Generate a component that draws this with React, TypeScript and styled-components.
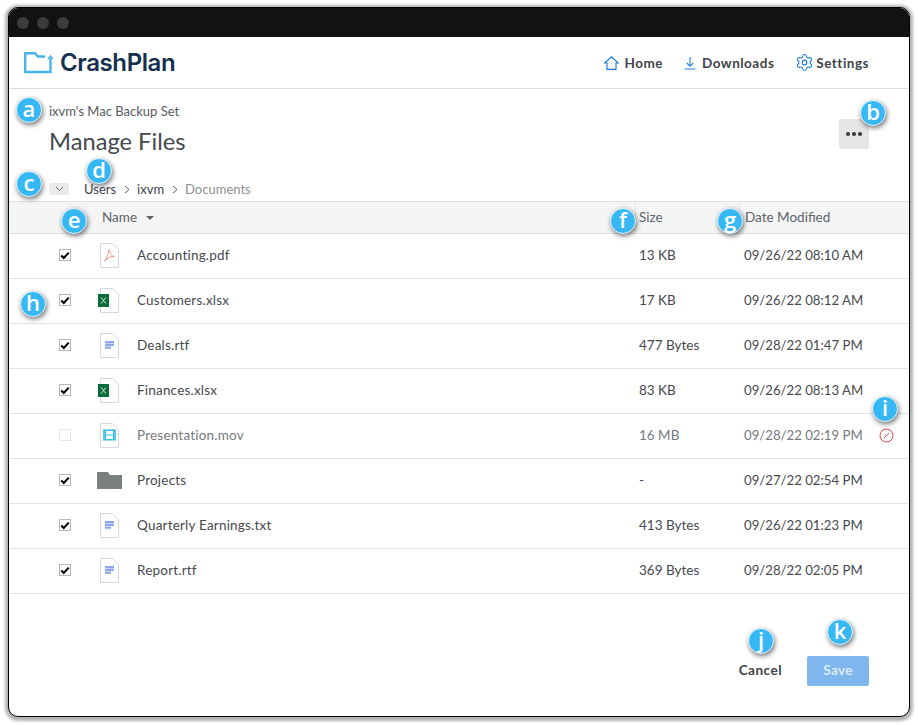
import type { ReactNode } from 'react'
import styled, { createGlobalStyle } from 'styled-components'
import { Settings as GearIcon } from 'lucide-react'

const GlobalStyle = createGlobalStyle`
  html, body {
    margin: 0;
    background: #fff;
  }
  body {
    font-family: "Lato", "Liberation Sans", sans-serif;
  }
`

const Page = styled.div`
  width: 918px;
  height: 725px;
  padding: 7px 8px;
  box-sizing: border-box;
  overflow: hidden;
`

const Window = styled.div`
  position: relative;
  width: 902px;
  height: 710px;
  box-sizing: border-box;
  border: 1px solid #000;
  border-radius: 10px;
  background: #fff;
  box-shadow: 0 1px 3px 3px rgba(0, 0, 0, 0.3);
  display: flex;
  flex-direction: column;
`

const TitleBar = styled.div`
  flex: none;
  height: 29px;
  background: #121212;
  border-radius: 9px 9px 0 0;
  display: flex;
  align-items: center;
  gap: 8px;
  padding: 0 0 0 8px;
  box-sizing: border-box;
`

const TrafficDot = styled.span`
  width: 12px;
  height: 12px;
  border-radius: 50%;
  background: #3b3b3b;
`

const Header = styled.header`
  flex: none;
  height: 52px;
  box-sizing: border-box;
  border-bottom: 1px solid #dcdcdc;
  display: flex;
  align-items: center;
  padding: 0 40px 0 15px;
`

const Logo = styled.div`
  display: flex;
  align-items: center;
  gap: 7px;
  color: #13304f;
  font-family: "Inter", sans-serif;
  font-size: 24px;
  font-weight: 600;
  letter-spacing: -0.4px;
`

const Nav = styled.nav`
  margin-left: auto;
  display: flex;
  align-items: center;
  gap: 21px;
`

const NavLink = styled.a`
  display: flex;
  align-items: center;
  gap: ${p => p.$gap}px;
  color: #3d4348;
  font-size: 13.5px;
  font-weight: 700;
  letter-spacing: 0.5px;
`

const TitleArea = styled.div`
  flex: none;
  height: 112px;
  box-sizing: border-box;
  padding: 15px 40px 0 40px;
  display: flex;
  flex-direction: column;
`

const TitleRow = styled.div`
  display: flex;
  justify-content: space-between;
`

const SetName = styled.div`
  font-size: 13px;
  line-height: 15px;
  color: #565b60;
`

const PageTitle = styled.h1`
  margin: 7px 0 0;
  font-size: 23.7px;
  line-height: 30px;
  font-weight: 400;
  color: #44494e;
`

const MoreButton = styled.button`
  width: 30px;
  height: 30px;
  margin-top: 15px;
  padding: 0;
  border: 0;
  border-radius: 2px;
  background: #e5e5e5;
  display: flex;
  align-items: center;
  justify-content: center;
  gap: 2.5px;
`

const MoreDot = styled.span`
  width: 3.5px;
  height: 3.5px;
  border-radius: 50%;
  background: #3c4247;
`

const CrumbRow = styled.div`
  margin-top: 26px;
  display: flex;
  align-items: center;
  height: 14px;
  font-size: 13px;
  color: #3f4449;
`

const Toggle = styled.button`
  width: 20px;
  height: 12px;
  margin-right: 15px;
  padding: 0;
  border: 0;
  border-radius: 2px;
  background: #eaeaea;
  display: flex;
  align-items: center;
  justify-content: center;
`

const CrumbSep = styled.svg`
  margin: 0 7.5px;
`

const CrumbCurrent = styled.span`
  color: #8d9195;
`

const TableHead = styled.div`
  flex: none;
  height: 33px;
  box-sizing: border-box;
  background: #f4f5f5;
  border-top: 1px solid #dfdfdf;
  border-bottom: 1px solid #dfdfdf;
  display: grid;
  grid-template-columns: 93px 533px 104px 1fr;
  align-items: stretch;
  font-size: 13.5px;
  color: #606469;
`

const HeadCell = styled.div`
  grid-column: ${p => p.$col};
  display: flex;
  align-items: center;
  gap: 9px;
  padding-left: ${p => p.$pad}px;
  padding-bottom: 1px;
  border-left: ${p => (p.$divider ? '1px solid #e4e5e5' : '0')};
`

const Caret = styled.span`
  width: 0;
  height: 0;
  margin-top: 2px;
  border-left: 4px solid transparent;
  border-right: 4px solid transparent;
  border-top: 4px solid #606469;
`

const Row = styled.div`
  flex: none;
  height: 45px;
  box-sizing: border-box;
  padding-bottom: 2px;
  border-bottom: 1px solid #e2e2e2;
  display: grid;
  grid-template-columns: 85px 43px 502px 105px 1fr;
  align-items: center;
  font-size: 13.5px;
  color: ${p => (p.$muted ? '#75797d' : '#45494d')};
`

const CheckCell = styled.div`
  padding-left: 50px;
  display: flex;
`

const CheckBox = styled.span`
  width: 12px;
  height: 12px;
  box-sizing: border-box;
  border: 1px solid ${p => (p.$off ? '#e6e6e6' : '#b5b8bd')};
  background: #fff;
  display: flex;
  align-items: center;
  justify-content: center;
`

const IconCell = styled.div`
  display: flex;
  margin-left: ${p => p.$offset}px;
`

const NameCell = styled.div`
  letter-spacing: 0.2px;
`

const DateCell = styled.div`
  display: flex;
  align-items: center;
  justify-content: space-between;
  padding-right: 15px;
  font-size: 13.2px;
`

const Footer = styled.footer`
  flex: 1;
  display: flex;
  justify-content: flex-end;
  align-items: flex-end;
  gap: 25px;
  padding: 0 40px 30px 0;
`

const CancelButton = styled.button`
  height: 30px;
  padding: 0 0 2px;
  border: 0;
  background: none;
  font: 700 13.5px "Lato", sans-serif;
  letter-spacing: 0.5px;
  color: #3d4348;
`

const SaveButton = styled.button`
  width: 62px;
  height: 30px;
  padding: 0 0 2px;
  border: 0;
  border-radius: 2px;
  background: #7fb6ee;
  font: 700 13.5px "Lato", sans-serif;
  letter-spacing: 0.3px;
  color: #dcebfa;
`

const Badge = styled.span`
  position: absolute;
  left: ${p => p.$x - 13 - 9}px;
  top: ${p => p.$y - 13 - 8}px;
  width: 26px;
  height: 26px;
  box-sizing: border-box;
  border: 1.5px solid #e8f6fd;
  border-radius: 50%;
  background: #35b8f4;
  box-shadow: 1px 2px 5px rgba(0, 0, 0, 0.55);
  color: #fff;
  font-family: "Open Sans", sans-serif;
  font-size: 22px;
  font-weight: 600;
  line-height: 21px;
  text-align: center;
`

const FileSvg = ({ children }: { children?: ReactNode }) => (
  <svg width="19" height="25" viewBox="0 0 19 25" fill="none">
    <path d="M0.5 0.5H12.5L18.5 6.5V24.5H0.5Z" fill="#fff" stroke="#d6d8da" />
    {children}
  </svg>
)

const PdfIcon = () => (
  <FileSvg>
    <path
      d="M9 6.5C8.6 9.5 7.5 14 4.5 18.2C8 14.5 11 13.5 14.5 13.5C11.5 13 9.8 10.5 9 6.5Z"
      stroke="#ee9a8e"
      strokeWidth="1"
    />
  </FileSvg>
)

const DocIcon = () => (
  <FileSvg>
    <path d="M5 8H14V10.2H5ZM5 10.8H14V13H5ZM5 13.6H11V15.8H5Z" fill="#8fa5ec" />
  </FileSvg>
)

const ExcelIcon = () => (
  <svg width="21" height="25" viewBox="0 0 21 25" fill="none">
    <path d="M2.5 0.5H14.5L20.5 6.5V24.5H2.5Z" fill="#fff" stroke="#d6d8da" />
    <rect x="0" y="6" width="11" height="13" fill="#0b6b3a" />
    <path d="M3.2 9.5L7.8 15.5M7.8 9.5L3.2 15.5" stroke="#d7eadf" strokeWidth="1" />
  </svg>
)

const MovieIcon = () => (
  <FileSvg>
    <path d="M3 6.5H16V17.5H3ZM6 8V11.5H13V8ZM6 12.5V16H13V12.5Z" fill="#3cc0e4" fillRule="evenodd" />
    <path
      d="M3 8.5H4.5V9.5H3ZM3 11.500H4.5V12.5H3ZM3 14.5H4.5V15.5H3ZM14.5 8.5H16V9.5H14.5ZM14.5 11.5H16V12.5H14.5ZM14.5 14.5H16V15.5H14.5Z"
      fill="#a8e3f3"
    />
  </FileSvg>
)

const FolderIcon = () => (
  <svg width="25" height="17" viewBox="0 0 25 17">
    <path d="M0 0H11L13 3H25V17H0Z" fill="#7a8080" />
  </svg>
)

const BlockedIcon = () => (
  <svg width="15" height="15" viewBox="0 0 15 15" fill="none" stroke="#e8434a">
    <circle cx="7.5" cy="7.5" r="6.5" />
    <path d="M5 10L10 5" />
  </svg>
)

const Check = () => (
  <svg width="12" height="11" viewBox="0 0 12 11" fill="none">
    <path d="M1.5 5.5L4.5 8.5L10.5 2" stroke="#000" strokeWidth="2.4" />
  </svg>
)

const files = [
  { name: 'Accounting.pdf', size: '13 KB', date: '09/26/22 08:10 AM', icon: <PdfIcon />, offset: 6 },
  { name: 'Customers.xlsx', size: '17 KB', date: '09/26/22 08:12 AM', icon: <ExcelIcon />, offset: 4 },
  { name: 'Deals.rtf', size: '477 Bytes', date: '09/28/22 01:47 PM', icon: <DocIcon />, offset: 6 },
  { name: 'Finances.xlsx', size: '83 KB', date: '09/26/22 08:13 AM', icon: <ExcelIcon />, offset: 4 },
  { name: 'Presentation.mov', size: '16 MB', date: '09/28/22 02:19 PM', icon: <MovieIcon />, offset: 6, blocked: true },
  { name: 'Projects', size: '-', date: '09/27/22 02:54 PM', icon: <FolderIcon />, offset: 3 },
  { name: 'Quarterly Earnings.txt', size: '413 Bytes', date: '09/26/22 01:23 PM', icon: <DocIcon />, offset: 6 },
  { name: 'Report.rtf', size: '369 Bytes', date: '09/28/22 02:05 PM', icon: <DocIcon />, offset: 6 },
]

const badges = [
  ['a', 29, 110],
  ['b', 873, 113],
  ['c', 29, 184],
  ['d', 99, 171],
  ['e', 74, 221],
  ['f', 623, 221],
  ['g', 730, 221],
  ['h', 33, 304],
  ['i', 885, 409],
  ['j', 761, 641],
  ['k', 840, 632],
] as const

export default function App() {
  return (
    <Page>
      <GlobalStyle />
      <Window>
        <TitleBar>
          <TrafficDot />
          <TrafficDot />
          <TrafficDot />
        </TitleBar>
        <Header>
          <Logo>
            <svg width="29" height="22" viewBox="0 0 29 22" fill="none" stroke="#46b4e8" strokeWidth="2.4">
              <path d="M1.2 21V1.2H11L14 4.5H21" />
              <path d="M1.2 20H26.5V6" />
              <path d="M24.2 7L26.5 4L28.8 7" strokeWidth="1.5" />
            </svg>
            CrashPlan
          </Logo>
          <Nav>
            <NavLink $gap={6}>
              <svg width="15" height="14" viewBox="0 0 15 14" fill="none" stroke="#1577d8" strokeWidth="1.1">
                <path d="M0.7 7L7.5 0.8L14.3 7H12V13.4H3V7Z" />
              </svg>
              Home
            </NavLink>
            <NavLink $gap={6}>
              <svg width="12" height="14" viewBox="0 0 12 14" fill="none" stroke="#2a86e0" strokeWidth="1.1">
                <path d="M6 1V10M2.8 7L6 10.2L9.2 7M0.5 13H11.5" />
              </svg>
              Downloads
            </NavLink>
            <NavLink $gap={2}>
              <GearIcon size={19} color="#1577d8" strokeWidth={1.3} />
              Settings
            </NavLink>
          </Nav>
        </Header>
        <TitleArea>
          <TitleRow>
            <div>
              <SetName>ixvm's Mac Backup Set</SetName>
              <PageTitle>Manage Files</PageTitle>
            </div>
            <MoreButton aria-label="More">
              <MoreDot />
              <MoreDot />
              <MoreDot />
            </MoreButton>
          </TitleRow>
          <CrumbRow>
            <Toggle aria-label="Collapse">
              <svg width="9" height="6" viewBox="0 0 9 6" fill="none" stroke="#666b70">
                <path d="M1 1L4.5 4.5L8 1" />
              </svg>
            </Toggle>
            Users
            <CrumbSep width="6" height="9" viewBox="0 0 6 9" fill="none" stroke="#555a5f">
              <path d="M1 1L5 4.5L1 8" />
            </CrumbSep>
            ixvm
            <CrumbSep width="6" height="9" viewBox="0 0 6 9" fill="none" stroke="#555a5f">
              <path d="M1 1L5 4.5L1 8" />
            </CrumbSep>
            <CrumbCurrent>Documents</CrumbCurrent>
          </CrumbRow>
        </TitleArea>
        <TableHead>
          <HeadCell $col={2}>
            Name
            <Caret />
          </HeadCell>
          <HeadCell $col={3} $pad={3} $divider>
            Size
          </HeadCell>
          <HeadCell $col={4} $pad={5} $divider>
            Date Modified
          </HeadCell>
        </TableHead>
        {files.map(file => (
          <Row key={file.name} $muted={file.blocked}>
            <CheckCell>
              <CheckBox $off={file.blocked}>{!file.blocked && <Check />}</CheckBox>
            </CheckCell>
            <IconCell $offset={file.offset}>{file.icon}</IconCell>
            <NameCell>{file.name}</NameCell>
            <div>{file.size}</div>
            <DateCell>
              {file.date}
              {file.blocked && <BlockedIcon />}
            </DateCell>
          </Row>
        ))}
        <Footer>
          <CancelButton>Cancel</CancelButton>
          <SaveButton>Save</SaveButton>
        </Footer>
        {badges.map(([letter, x, y]) => (
          <Badge key={letter} $x={x} $y={y}>
            {letter}
          </Badge>
        ))}
      </Window>
    </Page>
  )
}
